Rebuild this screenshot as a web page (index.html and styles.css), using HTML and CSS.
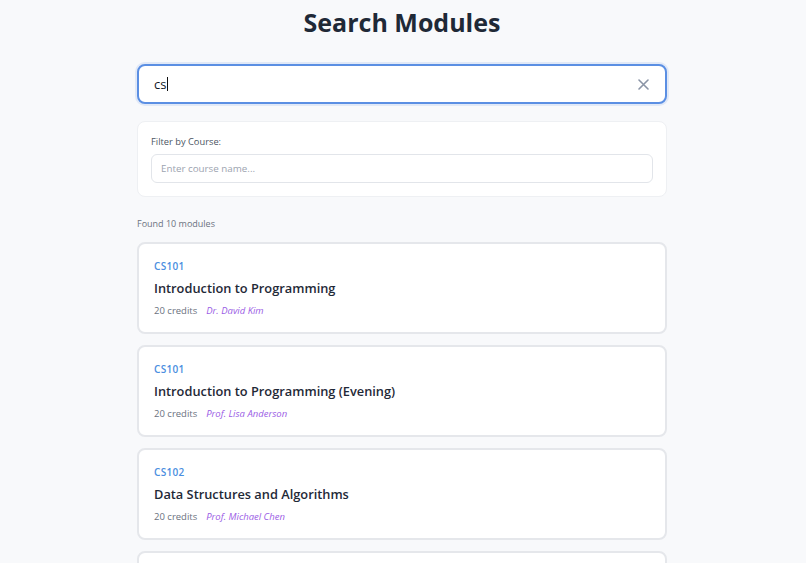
FILE: index.html
```html
<!DOCTYPE html>
<html lang="en">
<head>
<meta charset="utf-8">
<title>Search Modules</title>
<link rel="stylesheet" href="styles.css">
</head>
<body>
<main class="page">
  <h1 class="title">Search Modules</h1>
  <div class="search">
    <span class="search-text">cs<span class="caret"></span></span>
    <svg class="clear" width="11" height="11" viewBox="0 0 11 11"><path d="M1 1L10 10M10 1L1 10" stroke="#8a94a6" stroke-width="1.6" stroke-linecap="round"/></svg>
  </div>
  <section class="filter">
    <label class="filter-label">Filter by Course:</label>
    <div class="filter-input">Enter course name...</div>
  </section>
  <p class="count">Found 10 modules</p>
  <ul class="results">
    <li class="card">
      <div class="code">CS101</div>
      <div class="name">Introduction to Programming</div>
      <div class="meta"><span class="credits">20 credits</span><span class="lecturer">Dr. David Kim</span></div>
    </li>
    <li class="card">
      <div class="code">CS101</div>
      <div class="name">Introduction to Programming (Evening)</div>
      <div class="meta"><span class="credits">20 credits</span><span class="lecturer">Prof. Lisa Anderson</span></div>
    </li>
    <li class="card">
      <div class="code">CS102</div>
      <div class="name">Data Structures and Algorithms</div>
      <div class="meta"><span class="credits">20 credits</span><span class="lecturer">Prof. Michael Chen</span></div>
    </li>
    <li class="card"></li>
  </ul>
</main>
</body>
</html>
```

FILE: styles.css
```css
* { box-sizing: border-box; }
html, body { margin: 0; padding: 0; }
body {
  background: #f8f9fb;
  font-family: "Open Sans", "Noto Sans", sans-serif;
  color: #1f2937;
  height: 563px;
  overflow: hidden;
}
.page {
  width: 530px;
  margin: 0 auto;
  transform: translateX(-1px);
}
.title {
  margin: 5px 0 25px;
  text-align: center;
  font-size: 25px;
  line-height: 34px;
  font-weight: 700;
  color: #1f2937;
}
.search {
  height: 40px;
  border: 2px solid #5b8fe3;
  border-radius: 8px;
  background: #fff;
  display: flex;
  align-items: center;
  justify-content: space-between;
  padding: 0 16px 0 15px;
  box-shadow: 0 0 0 2px rgba(91, 143, 227, 0.15);
}
.search-text {
  font-size: 13px;
  color: #111827;
  display: flex;
  align-items: center;
}
.caret {
  display: inline-block;
  width: 1px;
  height: 14px;
  background: #111;
  margin-left: 1px;
}
.filter {
  margin-top: 17px;
  background: #fff;
  border: 1px solid #eef0f3;
  border-radius: 8px;
  padding: 13px 13px 13px;
}
.filter-label {
  display: block;
  font-size: 9.3px;
  line-height: 14px;
  color: #4b5563;
  margin-bottom: 5px;
}
.filter-input {
  height: 29px;
  border: 1px solid #e2e5ea;
  border-radius: 6px;
  padding: 0 9px;
  font-size: 9.8px;
  line-height: 27px;
  color: #9ca3af;
}
.count {
  margin: 20px 0 11px;
  font-size: 9px;
  line-height: 14px;
  color: #6b7280;
}
.results {
  list-style: none;
  margin: 0;
  padding: 0;
  display: flex;
  flex-direction: column;
  gap: 11px;
}
.card {
  background: #fff;
  border: 2px solid #e5e7eb;
  border-radius: 8px;
  padding: 16px 15px 15px;
  height: 92px;
  flex-shrink: 0;
}
.code {
  font-size: 10px;
  line-height: 12px;
  font-weight: 600;
  color: #4a8ee0;
  letter-spacing: 0.3px;
}
.name {
  margin-top: 7px;
  font-size: 12.8px;
  line-height: 18px;
  font-weight: 600;
  color: #1f2937;
}
.meta {
  margin-top: 7px;
  font-size: 9.5px;
  line-height: 14px;
  display: flex;
  gap: 9px;
}
.credits { color: #6b7280; }
.lecturer { color: #9b5de5; font-style: italic; }
```
